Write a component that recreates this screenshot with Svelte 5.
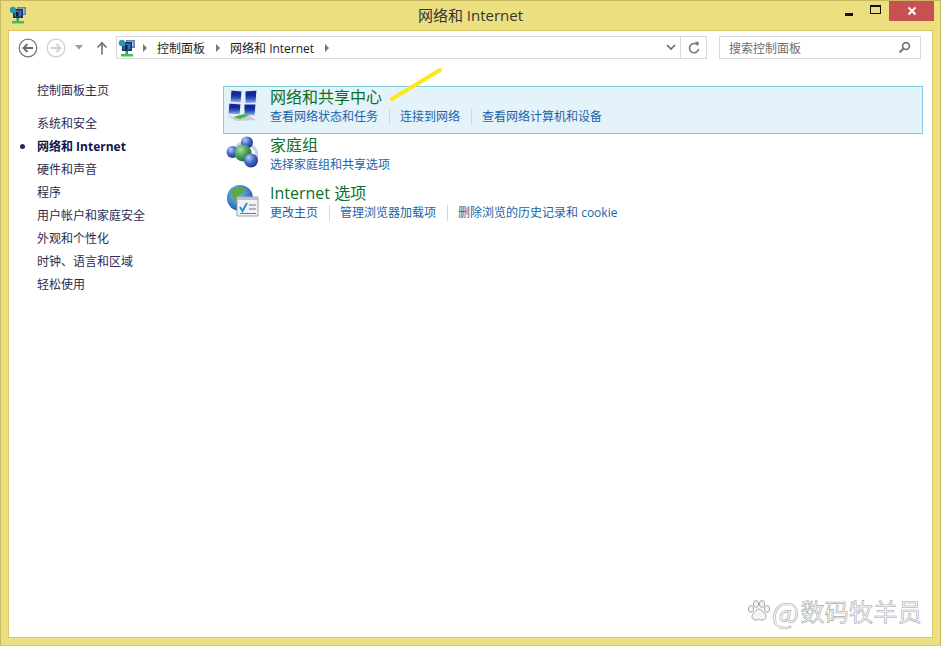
<script lang="ts">
  const nav = [
    { label: '系统和安全' },
    { label: '网络和 Internet', current: true },
    { label: '硬件和声音' },
    { label: '程序' },
    { label: '用户帐户和家庭安全' },
    { label: '外观和个性化' },
    { label: '时钟、语言和区域' },
    { label: '轻松使用' }
  ];

  const categories = [
    { id: 'network', title: '网络和共享中心', active: true, links: ['查看网络状态和任务', '连接到网络', '查看网络计算机和设备'] },
    { id: 'homegroup', title: '家庭组', active: false, links: ['选择家庭组和共享选项'] },
    { id: 'internet', title: 'Internet 选项', active: false, links: ['更改主页', '管理浏览器加载项', '删除浏览的历史记录和 cookie'] }
  ];
</script>

{#snippet cpIcon()}
  <svg width="18" height="18" viewBox="0 0 18 18">
    <rect x="8" y="1" width="9" height="8" fill="#6f7fb0" />
    <rect x="9.500" y="2.500" width="6" height="5" fill="#aebde0" />
    <rect x="4" y="3" width="10" height="9" fill="#1f2f58" />
    <rect x="5.500" y="4.500" width="7" height="6" fill="#2c74c8" />
    <circle cx="4" cy="4" r="3.200" fill="#2a98a6" />
    <rect x="7" y="6" width="2.500" height="4.500" fill="#0d1d3f" />
    <rect x="7.500" y="12" width="2.500" height="3" fill="#3a9a4a" />
    <rect x="3" y="15" width="12" height="2.500" fill="#3cc060" />
  </svg>
{/snippet}

<div class="window">
  <header class="titlebar">
    <span class="app-icon">{@render cpIcon()}</span>
    <span class="title">网络和 Internet</span>
    <div class="caption">
      <span class="cap-btn"><i class="min"></i></span>
      <span class="cap-btn"><i class="max"></i></span>
      <span class="cap-btn close">
        <svg width="10" height="10" viewBox="0 0 10 10"><path d="M1.500 1.500l7 7M8.500 1.500l-7 7" stroke="#fff" stroke-width="2" /></svg>
      </span>
    </div>
  </header>

  <div class="client">
    <div class="toolbar">
      <div class="nav-btns">
        <svg width="20" height="20" viewBox="0 0 20 20">
          <circle cx="10" cy="10" r="8.800" fill="#fff" stroke="#7c7c7c" stroke-width="1.300" />
          <path d="M15 10H6M9.500 6L5.500 10l4 4" fill="none" stroke="#6a6a6a" stroke-width="1.800" />
        </svg>
        <svg width="20" height="20" viewBox="0 0 20 20">
          <circle cx="10" cy="10" r="8.800" fill="#fff" stroke="#d2d2d2" stroke-width="1.300" />
          <path d="M5 10h9M10.500 6l4 4-4 4" fill="none" stroke="#d0d0d0" stroke-width="1.800" />
        </svg>
        <svg class="drop" width="8" height="5" viewBox="0 0 8 5"><path d="M0 0h8L4 4.500z" fill="#9a9a9a" /></svg>
        <svg class="up" width="12" height="14" viewBox="0 0 12 14"><path d="M6 13.500V2M1.500 6.500L6 1.800l4.500 4.700" fill="none" stroke="#777" stroke-width="1.700" /></svg>
      </div>

      <div class="address">
        <span class="addr-icon">{@render cpIcon()}</span>
        <i class="crumb-arrow first"></i>
        <span class="crumb">控制面板</span>
        <i class="crumb-arrow"></i>
        <span class="crumb">网络和 Internet</span>
        <i class="crumb-arrow"></i>
        <span class="spacer"></span>
        <svg class="chev" width="10" height="7" viewBox="0 0 10 7"><path d="M1 1l4 4 4-4" fill="none" stroke="#6d6d6d" stroke-width="1.700" /></svg>
        <span class="refresh">
          <svg width="14" height="14" viewBox="0 0 14 14"><path d="M10.600 4.200A4.600 4.600 0 1 0 11.600 8" fill="none" stroke="#777" stroke-width="1.600" /><path d="M7.600 0.800h4v4z" fill="#777" /></svg>
        </span>
      </div>

      <div class="search">
        <span class="crumb">搜索控制面板</span>
        <svg width="13" height="13" viewBox="0 0 13 13"><circle cx="8" cy="5" r="3.400" fill="none" stroke="#777" stroke-width="1.700" /><path d="M5.500 7.500L1.500 11.500" stroke="#777" stroke-width="2.200" /></svg>
      </div>
    </div>

    <div class="content">
      <aside class="sidebar">
        <div class="home">控制面板主页</div>
        <ul>
          {#each nav as item}
            <li class:current={item.current}>{item.label}</li>
          {/each}
        </ul>
      </aside>

      <main class="main">
        {#each categories as cat}
          <section class="category" class:active={cat.active}>
            <div class="cat-icon">
              {#if cat.id === 'network'}
                <svg width="34" height="34" viewBox="0 0 34 34">
                  <defs>
                    <linearGradient id="pane" x1="0" y1="0" x2="0" y2="1"><stop offset="0.35" stop-color="#12289a" /><stop offset="0.6" stop-color="#2c50bc" /><stop offset="1" stop-color="#a8c4ea" /></linearGradient>
                  </defs>
                  <g stroke="#e8eef6" stroke-width="1">
                    <path d="M5 2l11 1-1 12-11-1z" fill="url(#pane)" />
                    <path d="M19 3l12-1-1 13-11 1z" fill="url(#pane)" />
                    <path d="M3 15l12 1-1 11-12-1z" fill="url(#pane)" />
                    <path d="M18 16l12 0-1 12-11-1z" fill="url(#pane)" />
                  </g>
                  <path d="M0 27l10 6 20-1-6-4-14 2z" fill="#c9ccd0" />
                  <path d="M7 29l11-3 6 1-10 4z" fill="#3fb949" />
                </svg>
              {:else if cat.id === 'homegroup'}
                <svg width="34" height="34" viewBox="0 0 34 34">
                  <defs>
                    <radialGradient id="hgb" cx="0.35" cy="0.3" r="0.8"><stop offset="0" stop-color="#b9cdf2" /><stop offset="0.5" stop-color="#3f66c4" /><stop offset="1" stop-color="#1c2f80" /></radialGradient>
                    <radialGradient id="hgg" cx="0.35" cy="0.3" r="0.8"><stop offset="0" stop-color="#a8dca0" /><stop offset="0.55" stop-color="#3f9a4a" /><stop offset="1" stop-color="#15602c" /></radialGradient>
                  </defs>
                  <path d="M6 17Q16 -2 30 14Q33 28 22 30" fill="none" stroke="#c4d2e8" stroke-width="3" />
                  <circle cx="21" cy="6.500" r="6" fill="url(#hgb)" />
                  <circle cx="6.500" cy="16" r="6" fill="url(#hgb)" />
                  <circle cx="17" cy="17" r="8.500" fill="url(#hgg)" />
                  <circle cx="25" cy="24.500" r="7" fill="url(#hgb)" />
                </svg>
              {:else}
                <svg width="34" height="34" viewBox="0 0 34 34">
                  <defs>
                    <radialGradient id="globe" cx="0.4" cy="0.35" r="0.75"><stop offset="0" stop-color="#7fc4ee" /><stop offset="0.7" stop-color="#2f72b8" /><stop offset="1" stop-color="#1c3f80" /></radialGradient>
                  </defs>
                  <circle cx="14" cy="14" r="13" fill="url(#globe)" />
                  <path d="M7 5q6-3 12 0l-2 5-4 1-1 5-4-1-3-5zM18 14l6 1 1 5-5 5-3-4z" fill="#5fa83f" />
                  <path d="M11 13h21v19H11z" fill="#f1f3f6" stroke="#9a9fa8" />
                  <path d="M11 13h21v3H11z" fill="#bcc2cc" />
                  <path d="M14 23l2.500 4 4.500-8" fill="none" stroke="#2f8fd0" stroke-width="2" />
                  <path d="M23 21h7M23 25h7M14 29.500h16" stroke="#777" stroke-width="1.200" />
                </svg>
              {/if}
            </div>
            <div class="cat-body">
              <h2>{cat.title}</h2>
              <div class="links">
                {#each cat.links as link}
                  <a href="#top">{link}</a>
                {/each}
              </div>
            </div>
          </section>
        {/each}
      </main>
    </div>

    <svg class="marker" width="54" height="36" viewBox="0 0 54 36"><path d="M3 32L51 3" stroke="#ffe81a" stroke-width="4" stroke-linecap="round" /></svg>

    <div class="watermark">
      <svg width="24" height="22" viewBox="0 0 24 22">
        <g fill="#f4f4f4" stroke="#a8a8a8" stroke-width="1">
          <ellipse cx="4" cy="9" rx="2.600" ry="3.400" />
          <ellipse cx="9" cy="4" rx="2.600" ry="3.400" />
          <ellipse cx="15" cy="4" rx="2.600" ry="3.400" />
          <ellipse cx="20" cy="9" rx="2.600" ry="3.400" />
          <path d="M12 9c3 0 4 3 6 5s1 6-3 6c-1.500 0-2-.5-3-.5s-1.500.5-3 .5c-4 0-5-4-3-6s3-5 6-5z" />
        </g>
      </svg>
      <span class="at">@</span>
      <span>数码牧羊员</span>
    </div>
  </div>
</div>

<style>
  :global(body) {
    margin: 0;
  }

  .window {
    width: 941px;
    height: 646px;
    box-sizing: border-box;
    display: flex;
    flex-direction: column;
    padding: 0 7px 7px 7px;
    background: #ecdf80;
    border: 1px solid #c8b95e;
    border-bottom-color: #d8ca6c;
    font-family: "Open Sans", "Noto Sans CJK SC", "Liberation Sans", sans-serif;
    font-size: 12px;
    color: #1e1e1e;
    overflow: hidden;
  }

  .titlebar {
    flex: 0 0 29px;
    position: relative;
    display: flex;
    align-items: flex-start;
    justify-content: center;
  }

  .app-icon {
    position: absolute;
    left: 1px;
    top: 5px;
    line-height: 0;
  }

  .title {
    margin-top: 3px;
    font-size: 15px;
    line-height: 22px;
    color: #333;
  }

  .caption {
    position: absolute;
    right: -1px;
    top: 0;
    display: flex;
  }

  .cap-btn {
    width: 27px;
    height: 20px;
    display: flex;
    align-items: center;
    justify-content: center;
  }

  .cap-btn.close {
    width: 45px;
    background: #c75050;
  }

  .min {
    width: 8px;
    height: 3px;
    margin-top: 7px;
    background: #111;
  }

  .max {
    width: 9px;
    height: 6px;
    border: 1px solid #111;
    border-top-width: 2px;
    margin-bottom: 3px;
  }

  .client {
    flex: 1;
    position: relative;
    display: flex;
    flex-direction: column;
    background: #fff;
    border: 1px solid #d6c866;
    min-height: 0;
  }

  .toolbar {
    flex: 0 0 33px;
    display: flex;
    align-items: center;
    padding: 0 0 0 9px;
    box-sizing: border-box;
    height: 33px;
  }

  .nav-btns {
    width: 98px;
    display: flex;
    align-items: center;
    gap: 8px;
  }

  .nav-btns .drop {
    margin-left: 1px;
  }

  .nav-btns .up {
    margin-left: 5px;
  }

  .address {
    width: 591px;
    height: 23px;
    box-sizing: border-box;
    display: flex;
    align-items: center;
    border: 1px solid #d9d9d9;
    color: #1e1e1e;
    line-height: 19px;
  }

  .crumb {
    padding-top: 1px;
    line-height: 19px;
  }

  .addr-icon {
    margin-left: 1px;
    line-height: 0;
  }

  .crumb-arrow {
    width: 0;
    height: 0;
    margin: 0 10px 0 11px;
    border-left: 4px solid #777;
    border-top: 4px solid transparent;
    border-bottom: 4px solid transparent;
  }

  .crumb-arrow.first {
    margin-left: 7px;
  }

  .spacer {
    flex: 1;
  }

  .chev {
    margin-right: 4px;
  }

  .refresh {
    width: 25px;
    height: 21px;
    display: flex;
    align-items: center;
    justify-content: center;
    border-left: 1px solid #d9d9d9;
  }

  .search {
    width: 202px;
    height: 23px;
    box-sizing: border-box;
    margin-left: 12px;
    display: flex;
    align-items: center;
    justify-content: space-between;
    padding: 0 9px;
    border: 1px solid #d9d9d9;
    color: #6d6d6d;
  }

  .content {
    flex: 1;
    display: flex;
    min-height: 0;
    padding-top: 15px;
  }

  .sidebar {
    width: 214px;
    flex: none;
    padding-left: 28px;
    box-sizing: border-box;
    color: #2b2b52;
  }

  .home {
    height: 23px;
    line-height: 23px;
    margin-bottom: 10px;
  }

  ul {
    list-style: none;
    margin: 0;
    padding: 0;
  }

  li {
    height: 23px;
    line-height: 23px;
    position: relative;
  }

  li.current {
    font-weight: 700;
    color: #14144a;
  }

  li.current::before {
    content: "";
    position: absolute;
    left: -17px;
    top: 9px;
    width: 5px;
    height: 5px;
    border-radius: 50%;
    background: #1f2a60;
  }

  .main {
    width: 700px;
    flex: none;
    display: flex;
    flex-direction: column;
    margin-top: 7px;
  }

  .category {
    display: flex;
    height: 48px;
    box-sizing: border-box;
    border: 1px solid transparent;
  }

  .category.active {
    background: #e4f2fa;
    border-color: #7fcfdf;
  }

  .cat-icon {
    width: 46px;
    flex: none;
    padding: 1px 0 0 2px;
    box-sizing: border-box;
    line-height: 0;
  }

  .cat-body {
    padding-top: 1px;
  }

  h2 {
    margin: 0 0 3px;
    font-size: 16px;
    font-weight: 400;
    line-height: 18px;
    color: #0c7026;
  }

  .links {
    display: flex;
    line-height: 16px;
  }

  .links a {
    color: #1a64a8;
    text-decoration: none;
    padding-right: 11px;
    margin-right: 10px;
    border-right: 1px solid #d5d9dc;
  }

  .links a:last-child {
    border-right: 0;
  }

  .marker {
    position: absolute;
    left: 380px;
    top: 36px;
  }

  .watermark {
    position: absolute;
    right: 10px;
    bottom: 12px;
    display: flex;
    align-items: center;
    gap: 0;
    font-family: "Noto Sans CJK SC", sans-serif;
    font-size: 24px;
    letter-spacing: 0.3px;
    line-height: 28px;
    color: #fff;
    -webkit-text-stroke: 0.6px #a4a4a4;
  }

  .at {
    font-size: 29px;
    margin: 0 1px 0 1px;
  }
</style>
